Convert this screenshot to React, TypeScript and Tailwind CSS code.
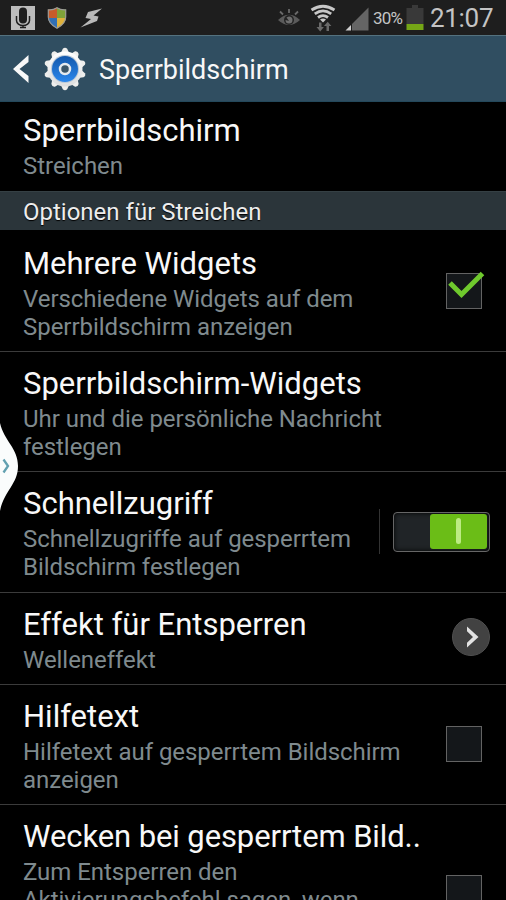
import React from "react";

type RowProps = {
  title: string;
  lines: string[];
  className: string;
  children?: React.ReactNode;
};

function Row({ title, lines, className, children }: RowProps) {
  return (
    <div className={`flex w-full shrink-0 items-start border-b border-[#3b3b3b] pl-[23px] ${className}`}>
      <div className="min-w-0 flex-1 whitespace-nowrap">
        <h2 className="text-[31px] leading-9 text-[#f8f8f8]">{title}</h2>
        <div className="mt-[3px] text-[24px] leading-7 tracking-[-0.04px] text-[#7f8a8e]">
          {lines.map((line) => (
            <p key={line}>{line}</p>
          ))}
        </div>
      </div>
      {children}
    </div>
  );
}

function Checkbox({ checked = false }: { checked?: boolean }) {
  return (
    <svg width="42" height="40" viewBox="0 0 42 40" className="mr-[21px] shrink-0">
      <rect x="3.5" y="3.5" width="35" height="35" fill="#14171a" stroke="#636363" />
      {checked && <path d="M7 13 18.500 24.500 39.500 3.500" fill="none" stroke="#6fc92d" strokeWidth="5" />}
    </svg>
  );
}

function StatusBar() {
  return (
    <div className="flex h-[35px] shrink-0 items-center bg-[#1e1e1e] pl-[11px] pr-[12px] text-[#c4c4c4]">
      {/* Notifications */}
      <svg width="24" height="24" viewBox="0 0 24 24" className="mt-px">
        <rect width="24" height="24" fill="#bcbcbc" />
        <rect x="8" y="1.500" width="8" height="16" rx="4" fill="#1e1e1e" />
        <path d="M5.500 10v4.500a6.500 5 0 0 0 13 0V10M12 19v3M9 21.500h6" fill="none" stroke="#1e1e1e" strokeWidth="1.500" />
      </svg>
      <svg width="20" height="22" viewBox="0 0 20 22" className="ml-3">
        <clipPath id="shield">
          <path d="M10 .5Q14 3 19 2.500V10q0 7-9 11.500Q1 17 1 10V2.500Q6 3 10 .5Z" />
        </clipPath>
        <g clipPath="url(#shield)">
          <path d="M0 0h10v11H0z" fill="#c75b2b" />
          <path d="M10 0h10v11H10z" fill="#7fa239" />
          <path d="M0 11h10v11H0z" fill="#3270b4" />
          <path d="M10 11h10v11H10z" fill="#dfb13b" />
        </g>
        <path d="M10 .8Q14 3.300 18.700 2.800V10q0 6.700-8.700 11.200Q1.300 16.700 1.300 10V2.800Q6 3.300 10 .8Z" fill="none" stroke="#9a9a96" strokeWidth="1.200" />
      </svg>
      <svg width="24" height="22" viewBox="0 0 24 22" className="ml-3">
        <path d="M23 1.500 9 5 6.500 11 12 12 1.500 20.500 18 14 19.500 9.500 14.500 8.500Z" fill="#b9b9b9" />
      </svg>

      {/* System icons */}
      <div className="ml-auto flex items-center">
        <svg width="24" height="20" viewBox="0 0 24 20" className="mt-px">
          <path d="M1 12Q12 1.500 23 12 12 22 1 12Z" fill="#5b5b5b" />
          <circle cx="12" cy="12" r="5" fill="#242424" />
          <path d="M12 8.500a3.500 3.500 0 1 1-3.500 3.500l3.500 1-2.500-3.500Z" fill="#6f6f6f" />
          <path d="M12 1v4M3 3.500l3 3M21 3.500l-3 3" stroke="#6a6a6a" strokeWidth="1.800" />
        </svg>
        <svg width="26" height="28" viewBox="0 0 26 28" className="ml-[9px]">
          <g fill="none" stroke="#c8c8c8" strokeWidth="2.800">
            <path d="M1.500 6Q13-1.500 24.500 6" />
            <path d="M4.800 9.800Q13 4 21.200 9.800" />
            <path d="M8 13.500Q13 9.800 18 13.500" />
          </g>
          <path d="m10 15.500 3 3 3-3Q13 13.500 10 15.500Z" fill="#c8c8c8" />
          <path d="M9 18.500v4.500H6.500l3.700 4.500 3.700-4.500h-2.400v-4.500ZM16.500 27v-5H14l3.700-4.300 3.700 4.300H19v5Z" fill="#6a6a6a" />
        </svg>
        <svg width="24" height="24" viewBox="0 0 24 24" className="ml-[9px] mt-[2px]">
          <path d="M7 17 23.500.5v23H7Z" fill="#656565" />
          <path d="M.5 23.500 6 18v5.500Z" fill="#d0d0d0" />
        </svg>
        <span className="ml-[4px] w-[31px] whitespace-nowrap pt-px text-[17px] leading-none tracking-[-0.8px]">30%</span>
        <svg width="18" height="25" viewBox="0 0 18 25" className="ml-[2px]">
          <path d="M6 0h6v3h5.500v16H.5V3H6Z" fill="#393939" />
          <path d="M.5 19h17v6H.5z" fill="#75a616" />
        </svg>
        <span className="ml-[6px] w-[64px] whitespace-nowrap text-[26px] leading-none tracking-[-0.3px]">21:07</span>
      </div>
    </div>
  );
}

function GearIcon() {
  const teeth = [0, 36, 72, 108, 144, 180, 216, 252, 288, 324];
  return (
    <svg width="44" height="44" viewBox="0 0 44 44">
      <defs>
        <linearGradient id="gear" x1="0" y1="0" x2="0" y2="1">
          <stop offset="0" stopColor="#ffffff" />
          <stop offset="1" stopColor="#dcdddd" />
        </linearGradient>
        <linearGradient id="ring" x1="0" y1="0" x2="0" y2="1">
          <stop offset="0" stopColor="#1258ac" />
          <stop offset="1" stopColor="#2b87ec" />
        </linearGradient>
      </defs>
      {teeth.map((angle) => (
        <path key={angle} d="M17.500 7 19.800 1.800q2.200-2 4.400 0L26.500 7Z" fill="#eeeeec" transform={`rotate(${angle} 22 22)`} />
      ))}
      <circle cx="22" cy="22" r="17.500" fill="url(#gear)" />
      <circle cx="22" cy="22" r="14" fill="#b9c9d8" />
      <circle cx="22" cy="22" r="13" fill="url(#ring)" />
      <circle cx="22" cy="22" r="5" fill="#3b5668" stroke="#e4e9ee" strokeWidth="2.500" />
    </svg>
  );
}

export default function App() {
  return (
    <div className="relative flex h-[900px] w-[506px] flex-col overflow-hidden bg-black font-['Roboto',sans-serif]">
      <StatusBar />

      <header className="flex h-[67px] shrink-0 items-center border-b border-t border-b-[#24485b] border-t-[#54727f] bg-[#304e61] pl-[12px]">
        <svg width="18" height="28" viewBox="0 0 18 28">
          <path d="M16.500 0v7L7.500 14l9 7v7L1 14Z" fill="#f8f8f8" />
        </svg>
        <div className="ml-[13px]">
          <GearIcon />
        </div>
        <h1 className="ml-[12px] pt-[2px] text-[27px] leading-8 text-[#f8f8f8]">Sperrbildschirm</h1>
      </header>

      <Row title="Sperrbildschirm" lines={["Streichen"]} className="h-[89px] border-b-0 pt-[11px]" />

      <div className="flex h-[39px] shrink-0 items-center border-t border-[#354044] bg-[#2b353a] pb-px pl-[23px] pt-[2px] text-[24px] leading-7 text-[#ededed] [text-shadow:0_1px_1px_#000]">
        Optionen für Streichen
      </div>

      <Row
        title="Mehrere Widgets"
        lines={["Verschiedene Widgets auf dem", "Sperrbildschirm anzeigen"]}
        className="h-[122px] pt-[16px]"
      >
        <div className="pt-[24px]">
          <Checkbox checked />
        </div>
      </Row>

      <Row
        title="Sperrbildschirm-Widgets"
        lines={["Uhr und die persönliche Nachricht", "festlegen"]}
        className="h-[120px] pt-[14px]"
      />

      <Row
        title="Schnellzugriff"
        lines={["Schnellzugriffe auf gesperrtem", "Bildschirm festlegen"]}
        className="h-[121px] pt-[14px]"
      >
        <div className="flex items-center pr-[16px] pt-[23px]">
          <div className="h-[45px] w-px bg-[#333333]" />
          <div className="ml-[13px] flex h-10 w-[97px] justify-end rounded-[4px] border border-[#666666] bg-[#202427] p-[2px] pt-px shadow-[inset_0_0_5px_#000]">
            <div className="flex h-[35px] w-[57px] items-center justify-center rounded-[3px] bg-[#6bbd17]">
              <div className="h-[26px] w-[5px] rounded-full bg-[#bceb83]" />
            </div>
          </div>
        </div>
      </Row>

      <Row title="Effekt für Entsperren" lines={["Welleneffekt"]} className="h-[92px] pt-[14px]">
        <div className="pr-4 pt-[11px]">
          <svg width="38" height="38" viewBox="0 0 38 38">
            <circle cx="19" cy="19" r="18.500" fill="#424242" stroke="#505050" />
            <path d="M15 8.500v4.700l6 5.800-6 5.800v4.700L26.500 19Z" fill="#e2e2e2" />
          </svg>
        </div>
      </Row>

      <Row
        title="Hilfetext"
        lines={["Hilfetext auf gesperrtem Bildschirm", "anzeigen"]}
        className="h-[120px] pt-[14px]"
      >
        <div className="pt-[24px]">
          <Checkbox />
        </div>
      </Row>

      <Row
        title="Wecken bei gesperrtem Bild.."
        lines={["Zum Entsperren den", "Aktivierungsbefehl sagen, wenn"]}
        className="h-[149px] pt-[14px] [&_h2]:tracking-[-0.1px]"
      >
        <div className="pt-[53px]">
          <Checkbox />
        </div>
      </Row>

      {/* Multi-window edge handle */}
      <svg width="19" height="96" viewBox="0 0 19 96" className="absolute left-0 top-[418px]">
        <path d="M0 5C4 23 18 30 18 48S4 73 0 93Z" fill="#fafcfc" />
        <path d="m3.500 41.500 4.500 6.500-4.500 6.500" fill="none" stroke="#62a0b0" strokeWidth="2.300" />
      </svg>
    </div>
  );
}
